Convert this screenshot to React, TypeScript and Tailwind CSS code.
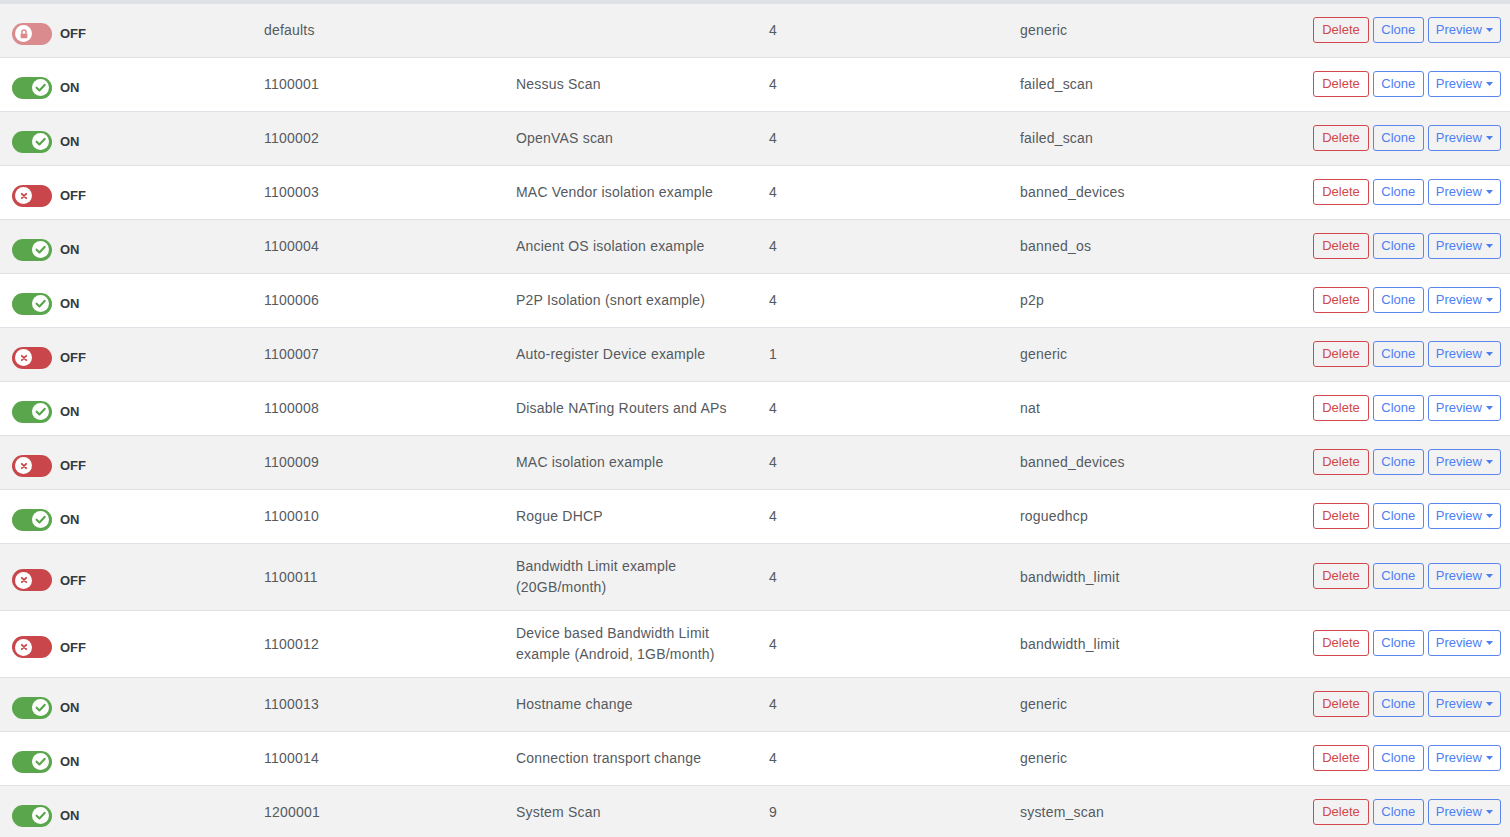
import React from "react";

type Rule = {
  on: boolean;
  locked?: boolean;
  id: string;
  name: string;
  priority: string;
  type: string;
};

const rules: Rule[] = [
  { on: false, locked: true, id: "defaults", name: "", priority: "4", type: "generic" },
  { on: true, id: "1100001", name: "Nessus Scan", priority: "4", type: "failed_scan" },
  { on: true, id: "1100002", name: "OpenVAS scan", priority: "4", type: "failed_scan" },
  { on: false, id: "1100003", name: "MAC Vendor isolation example", priority: "4", type: "banned_devices" },
  { on: true, id: "1100004", name: "Ancient OS isolation example", priority: "4", type: "banned_os" },
  { on: true, id: "1100006", name: "P2P Isolation (snort example)", priority: "4", type: "p2p" },
  { on: false, id: "1100007", name: "Auto-register Device example", priority: "1", type: "generic" },
  { on: true, id: "1100008", name: "Disable NATing Routers and APs", priority: "4", type: "nat" },
  { on: false, id: "1100009", name: "MAC isolation example", priority: "4", type: "banned_devices" },
  { on: true, id: "1100010", name: "Rogue DHCP", priority: "4", type: "roguedhcp" },
  { on: false, id: "1100011", name: "Bandwidth Limit example (20GB/month)", priority: "4", type: "bandwidth_limit" },
  { on: false, id: "1100012", name: "Device based Bandwidth Limit example (Android, 1GB/month)", priority: "4", type: "bandwidth_limit" },
  { on: true, id: "1100013", name: "Hostname change", priority: "4", type: "generic" },
  { on: true, id: "1100014", name: "Connection transport change", priority: "4", type: "generic" },
  { on: true, id: "1200001", name: "System Scan", priority: "9", type: "system_scan" },
];

function Toggle({ on, locked }: { on: boolean; locked?: boolean }) {
  const bg = on ? "bg-[#5aa64c]" : locked ? "bg-[#d98b8e]" : "bg-[#c9474a]";
  return (
    <div className="mt-[6px] flex items-center gap-2">
      <div
        className={`flex h-[22px] w-[40px] items-center rounded-full px-[3px] ${bg} ${
          on ? "justify-end" : "justify-start"
        }`}
      >
        <div className="flex h-[17px] w-[17px] items-center justify-center rounded-full bg-white">
          {on ? (
            <svg width="13" height="13" viewBox="0 0 12 12">
              <path d="M2.4 6.2 L5 8.7 L9.8 3.6" fill="none" stroke="#5aa64c" strokeWidth="2" strokeLinecap="round" strokeLinejoin="round" />
            </svg>
          ) : locked ? (
            <svg width="12" height="12" viewBox="0 0 12 12">
              <path d="M3.9 5.6 V4 a2.1 2.1 0 0 1 4.2 0 V5.6" fill="none" stroke="#d98b8e" strokeWidth="1.5" />
              <rect x="2.6" y="5.4" width="6.8" height="4.8" rx="0.9" fill="#d98b8e" />
            </svg>
          ) : (
            <svg width="12" height="12" viewBox="0 0 12 12">
              <path d="M3.8 3.8 L8.2 8.2 M8.2 3.8 L3.8 8.2" fill="none" stroke="#c9474a" strokeWidth="1.8" strokeLinecap="round" />
            </svg>
          )}
        </div>
      </div>
      <span className="text-[13px] font-semibold text-[#343a40]">{on ? "ON" : "OFF"}</span>
    </div>
  );
}

function Actions() {
  return (
    <div className="flex items-center justify-end gap-1 pr-[9px] pb-[2px] text-[13px] leading-[18px]">
      <button className="rounded-[3px] border border-[#d2484c] px-[8px] py-[3px] text-[#d0484b]">Delete</button>
      <button className="rounded-[3px] border border-[#5a86ee] px-[7.5px] py-[3px] text-[#4e7ef2]">Clone</button>
      <button className="flex items-center gap-[4px] rounded-[3px] border border-[#5a86ee] px-[7px] py-[3px] text-[#4e7ef2]">
        Preview
        <svg width="7" height="4" viewBox="0 0 7 4">
          <path d="M0 0 H7 L3.5 4 Z" fill="#4e7ef2" />
        </svg>
      </button>
    </div>
  );
}

export default function App() {
  return (
    <div className="min-h-screen bg-white font-['Liberation_Sans',Arial,sans-serif] text-[14px] leading-[21px] text-[#555a5f]">
      <div className="border-t-[4px] border-[#dee2e6]">
        {rules.map((r, i) => (
          <div
            key={r.id}
            className={`grid min-h-[54px] grid-cols-[252px_252px_253px_251px_252px_1fr] items-center border-b border-[#dee2e6] ${
              i % 2 === 0 ? "bg-[#f2f2f2]" : "bg-white"
            }`}
          >
            <div className="px-3">
              <Toggle on={r.on} locked={r.locked} />
            </div>
            <div className="px-3 py-3 tracking-[0.2px]">{r.id}</div>
            <div className="px-3 py-3 tracking-[0.2px]">{r.name}</div>
            <div className="px-3 py-3 tracking-[0.2px]">{r.priority}</div>
            <div className="px-3 py-3 tracking-[0.2px]">{r.type}</div>
            <Actions />
          </div>
        ))}
      </div>
    </div>
  );
}
